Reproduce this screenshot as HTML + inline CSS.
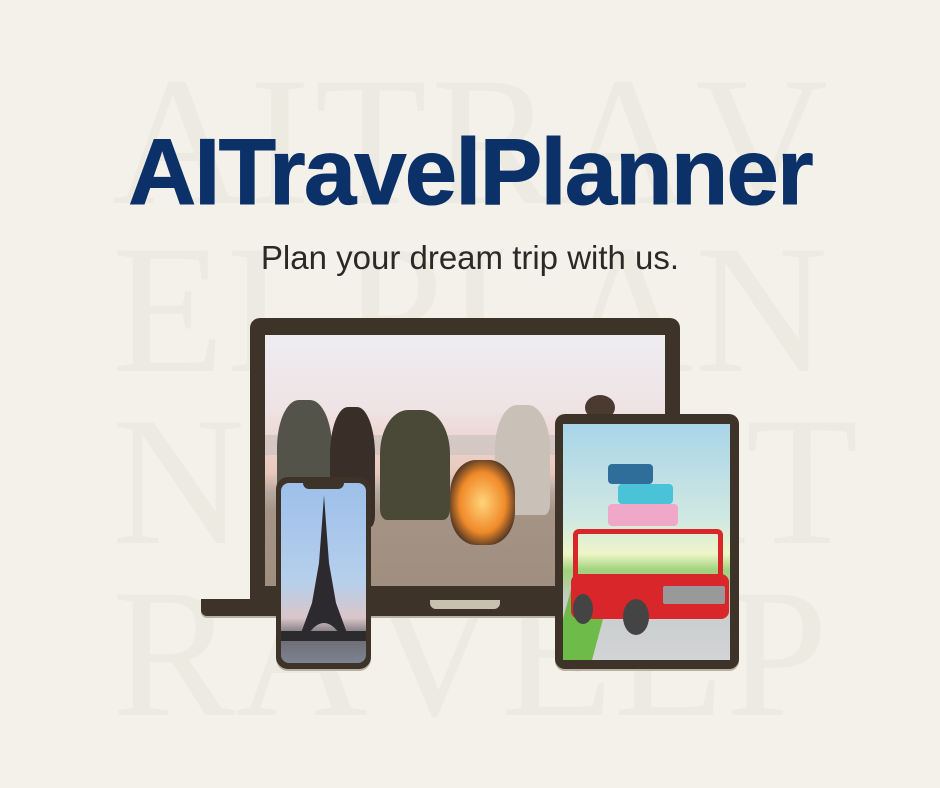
<!DOCTYPE html>
<html><head><meta charset="utf-8"><style>
*{margin:0;padding:0;box-sizing:border-box}
body{width:940px;height:788px;background:#f4f1ea;position:relative;overflow:hidden;font-family:"Liberation Sans",sans-serif}
.wm{position:absolute;left:112px;width:716px;display:flex;justify-content:space-between;font-family:"Liberation Serif",serif;font-size:184px;line-height:184px;height:184px;color:#edeae2}
.title{position:absolute;left:0;width:940px;top:122px;text-align:center;font-weight:bold;font-size:94px;line-height:100px;color:#0b3168;letter-spacing:-1.8px;-webkit-text-stroke:1px #0b3168}
.sub{position:absolute;left:0;width:940px;top:237px;text-align:center;font-size:33px;line-height:42px;color:#2b2926}
.abs{position:absolute}
</style></head><body>
<div class="wm" style="top:49px"><span>A</span><span>I</span><span>T</span><span>R</span><span>A</span><span>V</span></div>
<div class="wm" style="top:217px"><span>E</span><span>L</span><span>P</span><span>L</span><span>A</span><span>N</span></div>
<div class="wm" style="top:389px"><span>N</span><span>N</span><span>E</span><span>R</span><span>A</span><span>T</span></div>
<div class="wm" style="top:561px"><span>R</span><span>A</span><span>V</span><span>E</span><span>L</span><span>P</span></div>

<div class="title">AITravelPlanner</div>
<div class="sub">Plan your dream trip with us.</div>

<!-- laptop -->
<div class="abs" style="left:250px;top:318px;width:430px;height:284px;background:#3d3329;border-radius:10px 10px 0 0"></div>
<div class="abs" style="left:201px;top:599px;width:480px;height:17px;background:#3d3329;border-radius:0 0 4px 6px;box-shadow:0 2px 0 #b9b1a4"></div>
<div class="abs" style="left:430px;top:600px;width:70px;height:9px;background:#c9c1b0;border-radius:0 0 6px 6px"></div>
<div class="abs" style="left:265px;top:335px;width:400px;height:251px;overflow:hidden;background:linear-gradient(#eeedf1 0%,#efe3e4 30%,#e9c8bb 55%,#b9aaa2 62%,#a59486 70%,#a08e7f 100%)">
  <div class="abs" style="left:0;top:100px;width:400px;height:20px;background:#c7bfbc;opacity:.6"></div>
  <div class="abs" style="left:12px;top:65px;width:55px;height:120px;background:#54534a;border-radius:40% 40% 10% 10%"></div>
  <div class="abs" style="left:65px;top:72px;width:45px;height:120px;background:#3a2e28;border-radius:40% 40% 10% 10%"></div>
  <div class="abs" style="left:115px;top:75px;width:70px;height:110px;background:#4a4836;border-radius:40% 40% 10% 10%"></div>
  <div class="abs" style="left:230px;top:70px;width:55px;height:110px;background:#c9c0b8;border-radius:40% 40% 10% 10%"></div>
  <div class="abs" style="left:185px;top:125px;width:65px;height:85px;background:radial-gradient(#ffd47a,#f08a2a 50%,#3a2a22 80%);border-radius:40%"></div>
  <div class="abs" style="left:320px;top:60px;width:30px;height:25px;background:#4a3a30;border-radius:50%"></div>
</div>

<!-- phone -->
<div class="abs" style="left:276px;top:477px;width:95px;height:192px;background:#3d3329;border-radius:12px;box-shadow:0 2px 0 #b9b1a4"></div>
<div class="abs" style="left:281px;top:483px;width:85px;height:180px;border-radius:8px;overflow:hidden;background:linear-gradient(#9dc0ea 0%,#b6cfec 55%,#d9c6c9 75%,#6c6a72 85%,#7c8490 100%)">
  <div class="abs" style="left:22px;top:-1px;width:41px;height:7px;background:#3d3329;border-radius:0 0 6px 6px"></div>
  <svg class="abs" style="left:0;top:0" width="85" height="180"><path d="M43 12 L45 40 L48 80 L55 120 L66 150 L58 150 Q43 130 28 150 L20 150 L31 120 L38 80 L41 40 Z" fill="#2c2a2e"/><rect x="0" y="148" width="85" height="10" fill="#2b2a2c"/></svg>
</div>

<!-- tablet -->
<div class="abs" style="left:555px;top:414px;width:184px;height:255px;background:#3d3329;border-radius:10px;box-shadow:0 2px 0 #b9b1a4"></div>
<div class="abs" style="left:563px;top:424px;width:167px;height:236px;overflow:hidden;background:linear-gradient(#a9d5e8 0%,#cfe8e2 40%,#eef5c8 55%,#9fd27a 62%,#c8cbcc 75%,#d2d4d6 100%)">
  <div class="abs" style="left:0;top:150px;width:40px;height:90px;background:#6fbb4a;transform:skewX(-15deg)"></div>
  <div class="abs" style="left:45px;top:40px;width:45px;height:20px;background:#2f6e9a;border-radius:4px"></div>
  <div class="abs" style="left:55px;top:60px;width:55px;height:20px;background:#4ac2d8;border-radius:4px"></div>
  <div class="abs" style="left:45px;top:80px;width:70px;height:22px;background:#f0a8c8;border-radius:4px"></div>
  <div class="abs" style="left:10px;top:105px;width:150px;height:50px;border:5px solid #d8262a;border-bottom:none;border-radius:6px 6px 0 0"></div>
  <div class="abs" style="left:8px;top:150px;width:158px;height:45px;background:#d8262a;border-radius:8px"></div>
  <div class="abs" style="left:100px;top:162px;width:62px;height:18px;background:#999;border-radius:2px"></div>
  <div class="abs" style="left:60px;top:175px;width:26px;height:36px;background:#444;border-radius:50%"></div>
  <div class="abs" style="left:10px;top:170px;width:20px;height:30px;background:#444;border-radius:50%"></div>
</div>
</body></html>
